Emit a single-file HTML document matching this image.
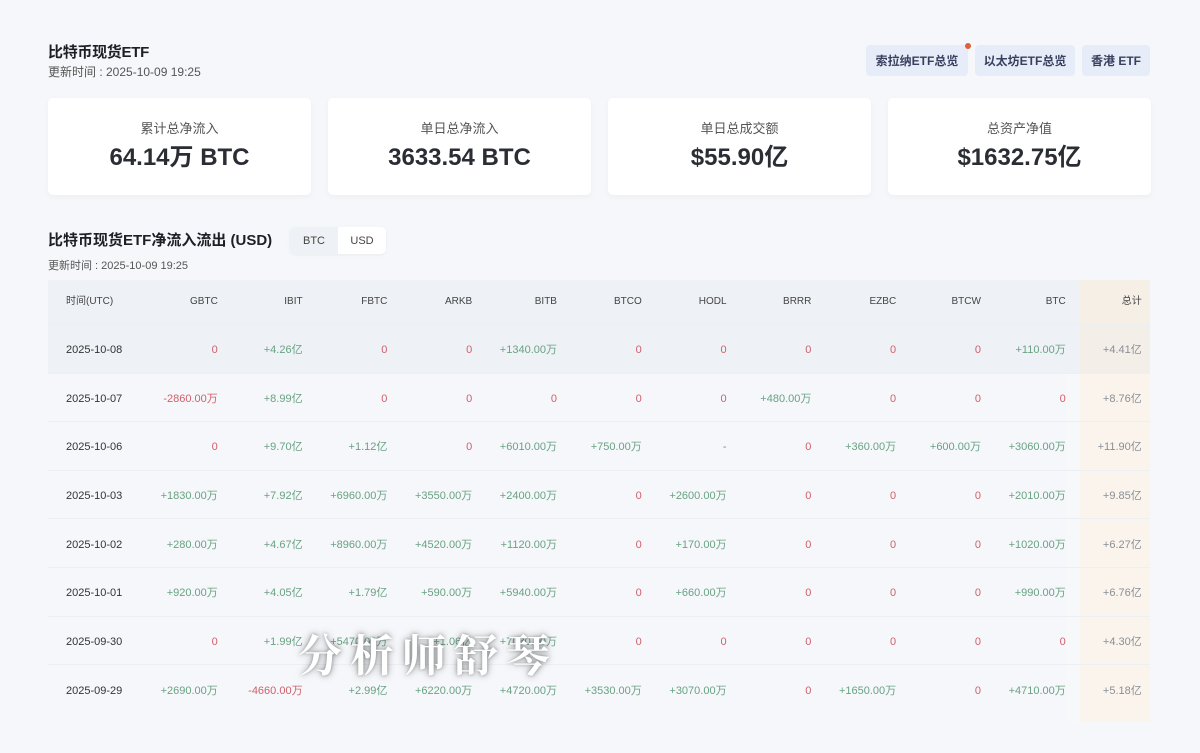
<!DOCTYPE html>
<html><head><meta charset="utf-8">
<style>
*{margin:0;padding:0;box-sizing:border-box}
body{width:1200px;height:753px;background:#f5f7fa;font-family:"Liberation Sans","Noto Sans CJK SC",sans-serif;color:#222;position:relative;overflow:hidden}
.abs{position:absolute}
.t1{left:48px;top:41px;font-size:15px;font-weight:bold;color:#1c1f26;letter-spacing:-0.3px}
.s1{left:48px;top:63px;font-size:12px;color:#555}
.btn{top:45px;height:31px;background:#e7edf8;border-radius:4px;font-size:12px;font-weight:bold;color:#39405e;display:flex;align-items:center;justify-content:center}
.dot{left:965px;top:43px;width:6px;height:6px;border-radius:50%;background:#e0603a}
.card{top:98px;width:263px;height:97px;background:#fff;border-radius:5px;box-shadow:0 2px 6px rgba(0,0,0,.04);text-align:center}
.card .l{position:absolute;left:0;right:0;top:22px;line-height:18px;font-size:13px;color:#555}
.card .v{position:absolute;left:0;right:0;top:45px;line-height:30px;height:30px;font-size:24px;font-weight:bold;color:#2a2d33}
.t2{left:48px;top:229px;font-size:15px;font-weight:bold;color:#1c1f26}
.tog{left:290px;top:227px;width:96px;height:27px;border-radius:5px;background:#fff;display:flex;font-size:11px;color:#444;box-shadow:0 1px 3px rgba(0,0,0,.05)}
.tog div{flex:1;display:flex;align-items:center;justify-content:center}
.s2{left:48px;top:257px;font-size:11px;color:#555}
.tbl{left:48px;top:280px;width:1102px}
.row{display:grid;grid-template-columns:85px repeat(11,84.8px) 84px;height:48.6px;align-items:center;border-bottom:1px solid #eceff3;font-size:11px;color:#6aa284}
.row>div{text-align:right;height:100%;display:flex;align-items:center;justify-content:flex-end;line-height:14px;padding-top:3px}
.row>div:first-child{justify-content:flex-start;padding-left:18px;color:#333}
.row>div:last-child{padding-right:8px;color:#8a8f96;background:linear-gradient(to right,#f7f8fa 14px,#fbf4ec 14px)}
.hd{height:45px;background:#eef1f5;font-size:10px;color:#444}
.hd>div{color:#444!important;padding-top:0!important}
.hd>div:last-child{background:linear-gradient(to right,#eef1f5 14px,#f6efe6 14px)}
.r{color:#d0606a!important}
.g0{color:#888!important}
.hl{background:#eef1f5}
.row.hl>div:last-child{background:linear-gradient(to right,#eef1f5 14px,#f3eee8 14px)}
.wm{left:298px;top:620px;font-size:44px;color:#fff;letter-spacing:8px;font-family:"Noto Serif CJK SC",serif;text-shadow:0 0 8px rgba(0,0,0,.4),0 0 3px rgba(0,0,0,.3);font-weight:bold}
</style></head><body>
<div class="abs t1">比特币现货ETF</div>
<div class="abs s1">更新时间 : 2025-10-09 19:25</div>
<div class="abs btn" style="left:866px;width:102px">索拉纳ETF总览</div>
<div class="abs btn" style="left:975px;width:100px">以太坊ETF总览</div>
<div class="abs btn" style="left:1082px;width:68px">香港 ETF</div>
<div class="abs dot"></div>

<div class="abs card" style="left:48px"><div class="l">累计总净流入</div><div class="v">64.14万 BTC</div></div>
<div class="abs card" style="left:328px"><div class="l">单日总净流入</div><div class="v">3633.54 BTC</div></div>
<div class="abs card" style="left:608px"><div class="l">单日总成交额</div><div class="v">$55.90亿</div></div>
<div class="abs card" style="left:888px"><div class="l">总资产净值</div><div class="v">$1632.75亿</div></div>

<div class="abs t2">比特币现货ETF净流入流出 (USD)</div>
<div class="abs tog"><div style="background:#eef1f5;border-radius:5px 0 0 5px">BTC</div><div>USD</div></div>
<div class="abs s2">更新时间 : 2025-10-09 19:25</div>

<div class="abs tbl">
<div class="row hd"><div>时间(UTC)</div><div>GBTC</div><div>IBIT</div><div>FBTC</div><div>ARKB</div><div>BITB</div><div>BTCO</div><div>HODL</div><div>BRRR</div><div>EZBC</div><div>BTCW</div><div>BTC</div><div>总计</div></div>
<div class="row hl"><div>2025-10-08</div><div class="r">0</div><div>+4.26亿</div><div class="r">0</div><div class="r">0</div><div>+1340.00万</div><div class="r">0</div><div class="r">0</div><div class="r">0</div><div class="r">0</div><div class="r">0</div><div>+110.00万</div><div>+4.41亿</div></div>
<div class="row"><div>2025-10-07</div><div class="r">-2860.00万</div><div>+8.99亿</div><div class="r">0</div><div class="r">0</div><div class="r">0</div><div class="r">0</div><div class="r">0</div><div>+480.00万</div><div class="r">0</div><div class="r">0</div><div class="r">0</div><div>+8.76亿</div></div>
<div class="row"><div>2025-10-06</div><div class="r">0</div><div>+9.70亿</div><div>+1.12亿</div><div class="r">0</div><div>+6010.00万</div><div>+750.00万</div><div class="g0">-</div><div class="r">0</div><div>+360.00万</div><div>+600.00万</div><div>+3060.00万</div><div>+11.90亿</div></div>
<div class="row"><div>2025-10-03</div><div>+1830.00万</div><div>+7.92亿</div><div>+6960.00万</div><div>+3550.00万</div><div>+2400.00万</div><div class="r">0</div><div>+2600.00万</div><div class="r">0</div><div class="r">0</div><div class="r">0</div><div>+2010.00万</div><div>+9.85亿</div></div>
<div class="row"><div>2025-10-02</div><div>+280.00万</div><div>+4.67亿</div><div>+8960.00万</div><div>+4520.00万</div><div>+1120.00万</div><div class="r">0</div><div>+170.00万</div><div class="r">0</div><div class="r">0</div><div class="r">0</div><div>+1020.00万</div><div>+6.27亿</div></div>
<div class="row"><div>2025-10-01</div><div>+920.00万</div><div>+4.05亿</div><div>+1.79亿</div><div>+590.00万</div><div>+5940.00万</div><div class="r">0</div><div>+660.00万</div><div class="r">0</div><div class="r">0</div><div class="r">0</div><div>+990.00万</div><div>+6.76亿</div></div>
<div class="row"><div>2025-09-30</div><div class="r">0</div><div>+1.99亿</div><div>+5470.00万</div><div>+1.06亿</div><div>+7030.00万</div><div class="r">0</div><div class="r">0</div><div class="r">0</div><div class="r">0</div><div class="r">0</div><div class="r">0</div><div>+4.30亿</div></div>
<div class="row" style="border-bottom:none"><div>2025-09-29</div><div>+2690.00万</div><div class="r">-4660.00万</div><div>+2.99亿</div><div>+6220.00万</div><div>+4720.00万</div><div>+3530.00万</div><div>+3070.00万</div><div class="r">0</div><div>+1650.00万</div><div class="r">0</div><div>+4710.00万</div><div>+5.18亿</div></div>
<div class="row" style="border-bottom:none;height:8px"><div></div><div></div><div></div><div></div><div></div><div></div><div></div><div></div><div></div><div></div><div></div><div></div><div></div></div>
</div>
<div class="abs wm">分析师舒琴</div>
</body></html>
